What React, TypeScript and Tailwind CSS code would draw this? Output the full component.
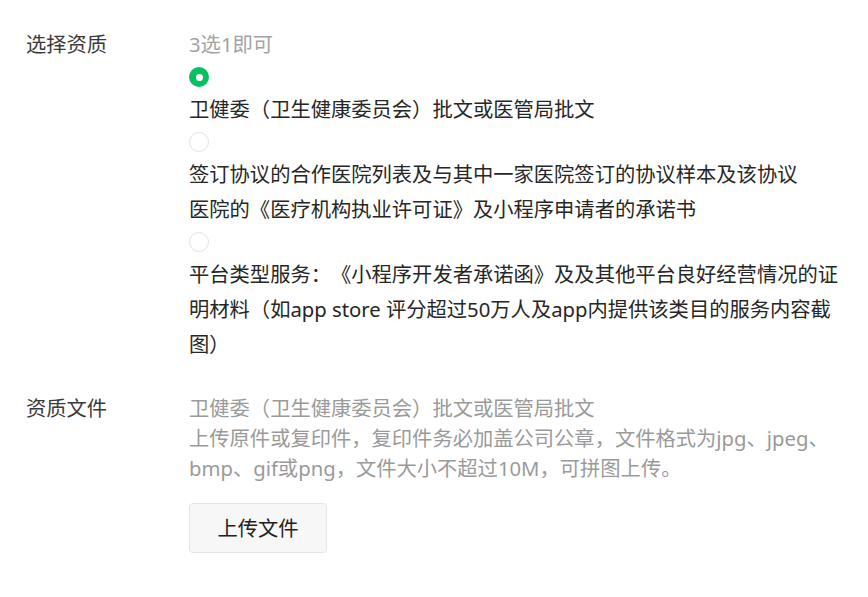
import React from "react";

const font = { fontFamily: '"Noto Sans", "Noto Sans CJK SC", sans-serif' };

function Radio({ checked }: { checked?: boolean }) {
  return (
    <div className="h-[30px] flex items-center">
      {checked ? (
        <div className="w-[20px] h-[20px] rounded-full bg-[#07c160] flex items-center justify-center">
          <div className="w-[7px] h-[7px] rounded-full bg-white" />
        </div>
      ) : (
        <div className="w-[20px] h-[20px] rounded-full border border-[#e3e3e3] bg-white" />
      )}
    </div>
  );
}

export default function App() {
  return (
    <div
      className="w-[868px] h-[597px] bg-white pl-[26px] pt-[29px] text-[20.3px] text-[#262626] [text-spacing-trim:space-all]"
      style={font}
    >
      <div className="flex">
        <div className="w-[163px] shrink-0 leading-[30px] text-[#3a3a3a]">选择资质</div>
        <div className="flex flex-col">
          <div className="leading-[30px] text-[#a3a3a3]">3选1即可</div>
          <div className="mt-[3px] flex flex-col">
            <Radio checked />
            <div className="leading-[35px] whitespace-nowrap">
              卫健委（卫生健康委员会）批文或医管局批文
            </div>
            <Radio />
            <div className="leading-[35px] whitespace-nowrap">
              签订协议的合作医院列表及与其中一家医院签订的协议样本及该协议
              <br />
              医院的《医疗机构执业许可证》及小程序申请者的承诺书
            </div>
            <Radio />
            <div className="leading-[35px] whitespace-nowrap">
              平台类型服务：《小程序开发者承诺函》及及其他平台良好经营情况的证
              <br />
              明材料（如app store 评分超过50万人及app内提供该类目的服务内容截
              <br />
              图）
            </div>
          </div>
        </div>
      </div>

      <div className="flex mt-[31px]">
        <div className="w-[163px] shrink-0 leading-[30px] text-[#3a3a3a]">资质文件</div>
        <div className="flex flex-col items-start">
          <div className="leading-[30px] text-[#9a9a9a] whitespace-nowrap">
            卫健委（卫生健康委员会）批文或医管局批文
            <br />
            上传原件或复印件，复印件务必加盖公司公章，文件格式为jpg、jpeg、
            <br />
            bmp、gif或png，文件大小不超过10M，可拼图上传。
          </div>
          <button className="mt-[20px] w-[138px] h-[50px] rounded-[4px] border border-[#e6e6e6] bg-[#f7f7f7] text-[20.3px] text-[#222] flex items-center justify-center">
            上传文件
          </button>
        </div>
      </div>
    </div>
  );
}
